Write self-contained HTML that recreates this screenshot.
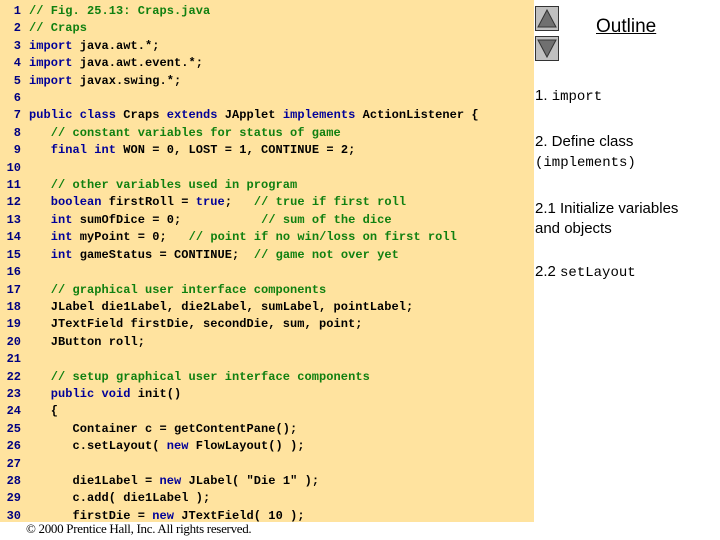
<!DOCTYPE html>
<html><head><meta charset="utf-8"><style>
html,body{margin:0;padding:0;width:720px;height:540px;overflow:hidden;background:#fff;position:relative;font-family:"Liberation Sans",sans-serif}
#panel{position:absolute;left:0;top:0;width:534px;height:522px;background:#FFE39F}
pre{position:absolute;left:0;top:3px;margin:0;font:bold 12px/17.41px "Liberation Mono",monospace;letter-spacing:0.05px;color:#000;white-space:pre}
.n{color:#000080;display:inline-block;width:21px;text-align:right;margin-right:8px;letter-spacing:0}
.k{color:#000099}
.c{color:#108010}
.copy{position:absolute;left:26px;top:521px;font:13px "Liberation Serif",serif;color:#000;letter-spacing:-0.3px}
.btn{position:absolute;left:535px;width:22px;height:23px;background:#c0c0c0;border:1px solid #333}
.t{position:absolute;left:535px;font-size:15px;color:#000}
.m{font-family:"Liberation Mono",monospace;font-size:14px}
</style></head><body>
<div id="panel"></div>
<pre><span class="n">1</span><span class="c">// Fig. 25.13: Craps.java</span>
<span class="n">2</span><span class="c">// Craps</span>
<span class="n">3</span><span class="k">import</span> java.awt.*;
<span class="n">4</span><span class="k">import</span> java.awt.event.*;
<span class="n">5</span><span class="k">import</span> javax.swing.*;
<span class="n">6</span>
<span class="n">7</span><span class="k">public class</span> Craps <span class="k">extends</span> JApplet <span class="k">implements</span> ActionListener {
<span class="n">8</span>   <span class="c">// constant variables for status of game</span>
<span class="n">9</span>   <span class="k">final int</span> WON = 0, LOST = 1, CONTINUE = 2;
<span class="n">10</span>
<span class="n">11</span>   <span class="c">// other variables used in program</span>
<span class="n">12</span>   <span class="k">boolean</span> firstRoll = <span class="k">true</span>;   <span class="c">// true if first roll</span>
<span class="n">13</span>   <span class="k">int</span> sumOfDice = 0;           <span class="c">// sum of the dice</span>
<span class="n">14</span>   <span class="k">int</span> myPoint = 0;   <span class="c">// point if no win/loss on first roll</span>
<span class="n">15</span>   <span class="k">int</span> gameStatus = CONTINUE;  <span class="c">// game not over yet</span>
<span class="n">16</span>
<span class="n">17</span>   <span class="c">// graphical user interface components</span>
<span class="n">18</span>   JLabel die1Label, die2Label, sumLabel, pointLabel;
<span class="n">19</span>   JTextField firstDie, secondDie, sum, point;
<span class="n">20</span>   JButton roll;
<span class="n">21</span>
<span class="n">22</span>   <span class="c">// setup graphical user interface components</span>
<span class="n">23</span>   <span class="k">public void</span> init()
<span class="n">24</span>   {
<span class="n">25</span>      Container c = getContentPane();
<span class="n">26</span>      c.setLayout( <span class="k">new</span> FlowLayout() );
<span class="n">27</span>
<span class="n">28</span>      die1Label = <span class="k">new</span> JLabel( "Die 1" );
<span class="n">29</span>      c.add( die1Label );
<span class="n">30</span>      firstDie = <span class="k">new</span> JTextField( 10 );</pre>
<div class="copy">© 2000 Prentice Hall, Inc.  All rights reserved.</div>
<div class="btn" style="top:6px"><svg width="22" height="23"><polygon points="11,3 20,20 2,20" fill="#707070" stroke="#333" stroke-width="1"/></svg></div>
<div class="btn" style="top:36px"><svg width="22" height="23"><polygon points="2,3 20,3 11,20" fill="#707070" stroke="#333" stroke-width="1"/></svg></div>
<div style="position:absolute;left:596px;top:16px;font-size:19px;text-decoration:underline">Outline</div>
<div class="t" style="top:87px">1. <span class="m">import</span></div>
<div class="t" style="top:132px;line-height:20px">2. Define class<br><span class="m">(implements)</span></div>
<div class="t" style="top:199px;line-height:20px">2.1 Initialize variables<br>and objects</div>
<div class="t" style="top:263px">2.2 <span class="m">setLayout</span></div>
</body></html>
